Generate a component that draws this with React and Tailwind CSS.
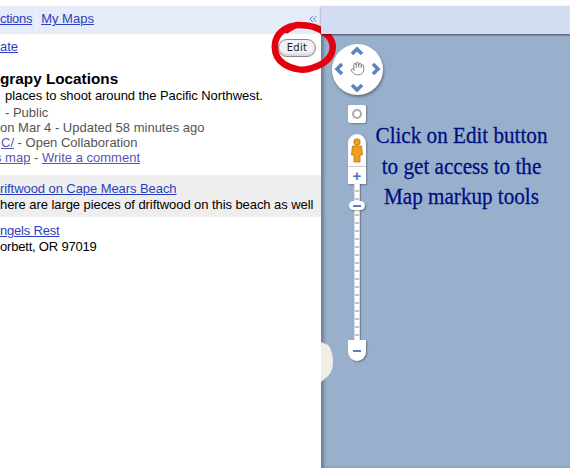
import React from 'react';
import { ChevronsLeft, Hand } from 'lucide-react';

const linkClass = 'text-[#2a3fc0] underline';
const mutedClass = 'text-[#555]';
const visitedClass = 'text-[#5a55b5] underline';

const Chevron = ({ points, className }) => (
  <svg width="14" height="14" viewBox="0 0 14 14" className={className}>
    <polyline points={points} fill="none" stroke="#5b84c2" strokeWidth="3.6" />
  </svg>
);

const PanControl = () => (
  <div className="absolute left-[332px] top-[44px] w-[51px] h-[51px] rounded-full bg-white shadow-[1px_2px_3px_rgba(0,0,0,0.35)]">
    <Chevron points="2,9 7,4 12,9" className="absolute left-[18px] top-[1px]" />
    <Chevron points="2,5 7,10 12,5" className="absolute left-[18px] top-[36px]" />
    <Chevron points="9,2 4,7 9,12" className="absolute left-[1px] top-[18px]" />
    <Chevron points="5,2 10,7 5,12" className="absolute left-[36px] top-[18px]" />
    <Hand size={15} strokeWidth={1.3} className="absolute left-[18px] top-[17px] text-[#666]" />
  </div>
);

const ZoomControl = () => (
  <div className="absolute left-[348px] top-[105px] w-[18px] flex flex-col items-center">
    <div className="w-[18px] h-[18px] bg-white rounded-[2px] shadow-[1px_1px_2px_rgba(0,0,0,0.3)] flex items-center justify-center">
      <div className="w-[10px] h-[10px] rounded-full border-2 border-[#aaa]" />
    </div>
    <div className="mt-[11px] w-[18px] h-[32px] bg-white rounded-t-[9px] shadow-[1px_1px_2px_rgba(0,0,0,0.3)] flex items-center justify-center">
      <svg width="12" height="25" viewBox="0 0 12 25">
        <circle cx="6" cy="4" r="3.2" fill="#f0a020" stroke="#b87008" strokeWidth="0.8" />
        <path d="M1.5 8h9l1 9H9v7H3v-7H.5z" fill="#f0a020" stroke="#b87008" strokeWidth="0.8" />
      </svg>
    </div>
    <div className="w-[18px] h-[18px] bg-white border-t border-[#ccc] shadow-[1px_1px_2px_rgba(0,0,0,0.3)] flex items-center justify-center text-[#4a74b8] font-bold text-[15px] leading-none">
      +
    </div>
    <div className="relative w-[6px] h-[156px] bg-[repeating-linear-gradient(to_bottom,#fff_0,#fff_6px,#c4c4c4_6px,#c4c4c4_8px)] border-x border-[#dde] shadow-[1px_0_1px_rgba(0,0,0,0.25)]">
      <div className="absolute left-[-6px] top-[17px] w-[16px] h-[9px] rounded-[5px] bg-white shadow-[1px_1px_2px_rgba(0,0,0,0.35)] flex items-center justify-center">
        <div className="w-[8px] h-[2px] bg-[#5b7fbd]" />
      </div>
    </div>
    <div className="w-[18px] h-[21px] bg-white rounded-b-[9px] shadow-[1px_1px_2px_rgba(0,0,0,0.35)] flex items-center justify-center">
      <div className="w-[8px] h-[2px] bg-[#5b7fbd]" />
    </div>
  </div>
);

const App = () => {
  return (
    <div className="relative w-[570px] h-[468px] overflow-hidden bg-white pt-[6px] flex font-['Liberation_Sans',Arial,sans-serif] text-[13px] leading-[15.5px] text-black">
      {/* left panel */}
      <div className="w-[321px] shrink-0 whitespace-nowrap">
        <div className="h-[28px] bg-[#e6ebf8] flex items-center pb-[2px] relative">
          <span className={`${linkClass} tracking-[-0.3px]`}>ctions</span>
          <span className="w-px h-[27px] bg-[#f4f6fc] ml-[4px]" />
          <span className={`${linkClass} ml-[4px]`}>My Maps</span>
          <ChevronsLeft size={12} strokeWidth={2} className="absolute left-[307px] top-[7px] text-[#5b78c8]" />
        </div>
        <div className="pt-[5px]">
          <div className={`${linkClass} h-[15px]`}>ate</div>
          <div className="mt-[15px] font-bold text-[15.3px] leading-[20px]">grapy Locations</div>
          <div className="pl-[5px] -mt-[1px] tracking-[-0.07px]">places to shoot around the Pacific Northwest.</div>
          <div className={`${mutedClass} pl-[5px] mt-px`}>- Public</div>
          <div className={`${mutedClass} leading-[15px]`}>on Mar 4 - Updated 58 minutes ago</div>
          <div className={`${mutedClass} pl-px leading-[15px]`}>
            <span className={visitedClass}>C/</span> - Open Collaboration
          </div>
          <div className={`${mutedClass} -ml-[5px] leading-[15px]`}>
            <span className={visitedClass}>s map</span> -{' '}
            <span className={visitedClass}>Write a comment</span>
          </div>
          <div className="mt-[10px] h-[42px] bg-[#eeeeee] pt-[6px] tracking-[-0.07px]">
            <div className={linkClass}>riftwood on Cape Mears Beach</div>
            <div>here are large pieces of driftwood on this beach as well</div>
          </div>
          <div className="mt-[6px] tracking-[-0.2px]">
            <div className={linkClass}>ngels Rest</div>
            <div>orbett, OR 97019</div>
          </div>
        </div>
      </div>

      {/* right side */}
      <div className="flex-1 flex flex-col">
        <div className="h-[28px] bg-[#d3dcf2] shadow-[0_1px_2px_rgba(0,0,0,0.5)] z-10" />
        <div className="flex-1 bg-[#99b0cc] shadow-[inset_3px_0_3px_rgba(60,70,90,0.45)]" />
      </div>

      {/* edit button */}
      <div className="absolute left-[278px] top-[39px] w-[38px] h-[18px] rounded-full bg-[#f2f2f2] border border-[#888] shadow-[inset_0_-2px_2px_rgba(0,0,0,0.12)] flex items-center justify-center text-[10px] font-['DejaVu_Sans',sans-serif] tracking-[0.3px] text-[#222]">
        Edit
      </div>

      {/* hand-drawn red ring */}
      <svg className="absolute left-[268px] top-[18px]" width="70" height="58" viewBox="0 0 70 58">
        <path
          d="M25 8C15 10 8 17 7 26c-1 9 3 16 9 20 9 6 20 7 28 4 10-3 18-8 20-16 2-7 0-13-6-18C50 9 42 7 30 7c-4 0-8 3-11 5"
          fill="none"
          stroke="#e5000f"
          strokeWidth="6.5"
          strokeLinecap="round"
        />
      </svg>

      <PanControl />
      <ZoomControl />

      {/* beige map fragment */}
      <svg className="absolute left-[321px] top-[342px]" width="13" height="40" viewBox="0 0 13 40">
        <path d="M0 0l7 3c3 3 5 11 5 17s-2 11-5 14l-7 6z" fill="#f1eee4" />
      </svg>

      {/* annotation */}
      <div className="absolute left-[353px] top-[120px] w-[217px] text-center font-['Liberation_Serif',serif] text-[24px] leading-[30.5px] text-[#000f80] scale-x-[0.88] [-webkit-text-stroke:0.3px_#000f80]">
        <div>Click on Edit button</div>
        <div>to get access to the</div>
        <div>Map markup tools</div>
      </div>
    </div>
  );
};

export default App;
